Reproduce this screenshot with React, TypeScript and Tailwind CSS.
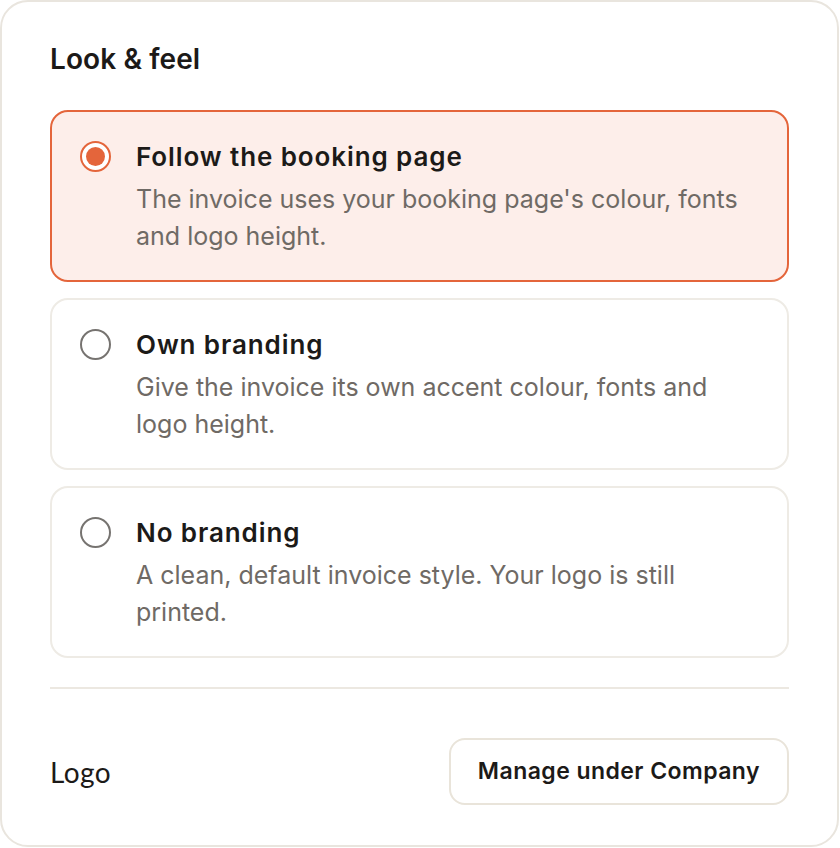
const options = [
  {
    title: 'Follow the booking page',
    desc: "The invoice uses your booking page's colour, fonts and logo height.",
    selected: true,
  },
  {
    title: 'Own branding',
    desc: 'Give the invoice its own accent colour, fonts and logo height.',
    selected: false,
  },
  {
    title: 'No branding',
    desc: 'A clean, default invoice style. Your logo is still printed.',
    selected: false,
  },
]

function Radio({ on }: { on: boolean }) {
  if (on) {
    return (
      <span className="mt-[1px] flex h-[31px] w-[31px] shrink-0 items-center justify-center rounded-full border-2 border-[#e4653b] bg-white">
        <span className="h-[19px] w-[19px] rounded-full bg-[#e4653b]" />
      </span>
    )
  }
  return <span className="mt-[1px] h-[31px] w-[31px] shrink-0 rounded-full border-2 border-[#767370] bg-white" />
}

export default function App() {
  return (
    <div className="h-[848px] w-[840px] bg-white" style={{ fontFamily: 'Inter, sans-serif' }}>
      <div className="flex h-[847px] w-[839px] flex-col rounded-[28px] border-2 border-[#e9e5de] bg-white px-12 pt-[38px]">
        <h2 className="text-[28px] font-semibold leading-[38px] tracking-[0.1px] text-[#1c1a18]">Look &amp; feel</h2>

        <div className="mt-[32px] flex flex-col gap-[16px]">
          {options.map((o) => (
            <div
              key={o.title}
              className={
                o.selected
                  ? 'flex gap-[25px] rounded-[18px] border-2 border-[#e4653b] bg-[#fdeeea] pl-[28px] pr-[30px] pt-[28px] pb-[25px]'
                  : 'flex gap-[25px] rounded-[18px] border-2 border-[#eeebe5] bg-white pl-[28px] pr-[30px] pt-[28px] pb-[25px]'
              }
            >
              <Radio on={o.selected} />
              <div className="flex flex-col">
                <div className="text-[26px] font-semibold leading-[34px] tracking-[0.9px] text-[#1c1a18]">{o.title}</div>
                <div className="mt-[7px] text-[25px] leading-[37px] text-[#6f6a65]">{o.desc}</div>
              </div>
            </div>
          ))}
        </div>

        <div className="mt-[29px] h-[2px] bg-[#ece8e1]" />

        <div className="mt-[49px] flex items-center justify-between">
          <span className="text-[28px] tracking-[0.4px] text-[#1c1a18]" style={{ fontFamily: 'Lato, sans-serif' }}>
            Logo
          </span>
          <button className="h-[67px] rounded-[16px] border-2 border-[#e9e4da] bg-white px-[27px] text-[23px] font-semibold tracking-[0.45px] text-[#1c1a18]">
            Manage under Company
          </button>
        </div>
      </div>
    </div>
  )
}
